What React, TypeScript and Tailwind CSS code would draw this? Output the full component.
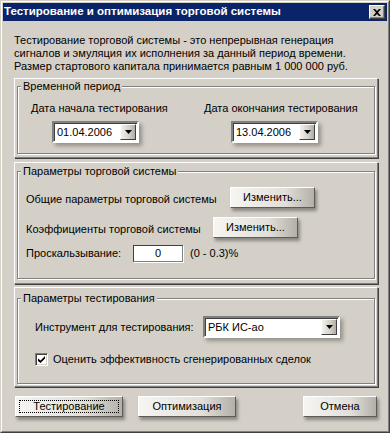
import React from 'react';

const FONT = "font-['Liberation_Sans',Arial,sans-serif]";

const Button: React.FC<{ className?: string; focused?: boolean; children: React.ReactNode }> = ({ className = '', focused = false, children }) => (
  <div
    className={`relative flex items-center justify-center h-[21px] border border-t-white border-l-white border-r-[#5e5b55] border-b-[#5e5b55] bg-[linear-gradient(to_right,#f6f5f2,#e2dfda_65%,#b4b0a8)] shadow-[2px_3px_3px_rgba(0,0,0,0.35)] text-[11px] text-black ${className}`}
  >
    {focused && <div className="absolute inset-[3px] border border-dotted border-black" />}
    <span className="relative">{children}</span>
  </div>
);

const DropArrow: React.FC = () => (
  <div className="w-[16px] h-full flex items-center justify-center border border-t-white border-l-white border-r-[#404040] border-b-[#404040] bg-[linear-gradient(to_right,#f2f1ee,#d4d0c8_60%,#b0aca4)]">
    <svg width="7" height="4" viewBox="0 0 7 4">
      <path d="M0 0h7L3.5 4z" fill="#000" />
    </svg>
  </div>
);

const Combo: React.FC<{ value: string; className?: string }> = ({ value, className = '' }) => (
  <div
    className={`flex h-[22px] bg-white border-2 border-t-[#808080] border-l-[#808080] border-r-white border-b-white shadow-[inset_1px_1px_0_#404040,3px_3px_4px_rgba(0,0,0,0.3)] ${className}`}
  >
    <div className="flex-1 flex items-center pl-[3px] text-[11px] text-black">{value}</div>
    <div className="py-[1px] pr-[1px]">
      <DropArrow />
    </div>
  </div>
);

const Group: React.FC<{ title: string; className?: string; children: React.ReactNode }> = ({ title, className = '', children }) => (
  <div className={`relative border border-[#808080] shadow-[inset_1px_1px_0_white,1px_1px_0_white] ${className}`}>
    <span className="absolute left-[3px] -top-[7px] px-[2px] bg-[#d4d0c8] text-[11px] leading-[13px]">{title}</span>
    {children}
  </div>
);

const Panel: React.FC<{ className?: string; children: React.ReactNode }> = ({ className = '', children }) => (
  <div className={`border border-t-white border-l-white border-r-[#808080] border-b-[#808080] shadow-[1px_1px_0_#404040] px-[2px] ${className}`}>
    {children}
  </div>
);

export default function App() {
  return (
    <div className={`${FONT} w-[390px] h-[433px] bg-[#d4d0c8] border border-t-[#d4d0c8] border-l-[#d4d0c8] border-r-[#404040] border-b-[#404040]`}>
      <div className="h-full border border-t-white border-l-white border-r-[#808080] border-b-[#808080] p-[1px] flex flex-col">
        {/* title bar */}
        <div className="h-[18px] bg-[#0a246a] flex items-center justify-between pl-[1px] pr-[2px]">
          <span className="text-white font-bold text-[11.5px]">Тестирование и оптимизация торговой системы</span>
          <div className="w-[16px] h-[14px] bg-[#d4d0c8] border border-t-white border-l-white border-r-[#404040] border-b-[#404040] shadow-[inset_-1px_-1px_0_#808080] flex items-center justify-center">
            <svg width="8" height="7" viewBox="0 0 8 7">
              <path d="M0 0h2l2 2 2-2h2L5 3.5 8 7H6L4 5 2 7H0l3-3.5z" fill="#000" />
            </svg>
          </div>
        </div>

        <div className="pl-[11px] pr-[9px] text-[11px] text-black">
          <p className="pt-[13px] leading-[13px]">
            Тестирование торговой системы - это непрерывная генерация
            <br />
            сигналов и эмуляция их исполнения за данный период времени.
            <br />
            Размер стартового капитала принимается равным 1 000 000 руб.
          </p>

          {/* period */}
          <Panel className="mt-[5px] h-[80px] pt-[7px]">
            <Group title="Временной период" className="h-[68px]">
              <div className="flex pt-[15px]">
                <div className="w-[186px] pl-[13px]">
                  <div className="leading-[13px]">Дата начала тестирования</div>
                  <Combo value="01.04.2006" className="mt-[6px] ml-[21px] w-[87px]" />
                </div>
                <div>
                  <div className="leading-[13px]">Дата окончания тестирования</div>
                  <Combo value="13.04.2006" className="mt-[6px] ml-[27px] w-[87px]" />
                </div>
              </div>
            </Group>
          </Panel>

          {/* system params */}
          <Panel className="mt-[4px] h-[122px] pt-[8px]">
            <Group title="Параметры торговой системы" className="h-[108px] pl-[8px]">
              <div className="flex items-center h-[21px] mt-[15px]">
                <span className="w-[204px] pt-[3px]">Общие параметры торговой системы</span>
                <Button className="w-[85px]">Изменить...</Button>
              </div>
              <div className="flex items-center h-[21px] mt-[9px]">
                <span className="w-[187px] pt-[3px]">Коэффициенты торговой системы</span>
                <Button className="w-[85px]">Изменить...</Button>
              </div>
              <div className="flex items-center h-[17px] mt-[7px]">
                <span className="w-[107px]">Проскальзывание:</span>
                <div className="w-[50px] h-[17px] bg-white border border-t-[#404040] border-l-[#404040] border-r-[#808080] border-b-[#808080] shadow-[1px_1px_0_white] flex items-center justify-center">
                  0
                </div>
                <span className="ml-[7px]">(0 - 0.3)%</span>
              </div>
            </Group>
          </Panel>

          {/* testing params */}
          <Panel className="mt-[3px] h-[100px] pt-[10px]">
            <Group title="Параметры тестирования" className="h-[86px] pl-[17px]">
              <div className="flex items-center mt-[17px]">
                <span className="w-[168px]">Инструмент для тестирования:</span>
                <Combo value="РБК ИС-ао" className="w-[137px]" />
              </div>
              <div className="flex items-center mt-[13px]">
                <div className="w-[13px] h-[13px] bg-white border border-t-[#808080] border-l-[#808080] border-r-white border-b-white shadow-[inset_1px_1px_0_#404040,inset_-1px_-1px_0_#d4d0c8] flex items-center justify-center">
                  <svg width="7" height="7" viewBox="0 0 7 7">
                    <path d="M0 2.5v2.5l2.5 2L7 2.5V0L2.5 4.5z" fill="#000" />
                  </svg>
                </div>
                <span className="ml-[5px]">Оценить эффективность сгенерированных сделок</span>
              </div>
            </Group>
          </Panel>

          {/* buttons */}
          <div className="flex mt-[9px]">
            <Button focused className="w-[108px] ml-[1px]">Тестирование</Button>
            <Button className="w-[98px] ml-[15px]">Оптимизация</Button>
            <Button className="w-[74px] ml-auto mr-[1px]">Отмена</Button>
          </div>
        </div>
      </div>
    </div>
  );
}
